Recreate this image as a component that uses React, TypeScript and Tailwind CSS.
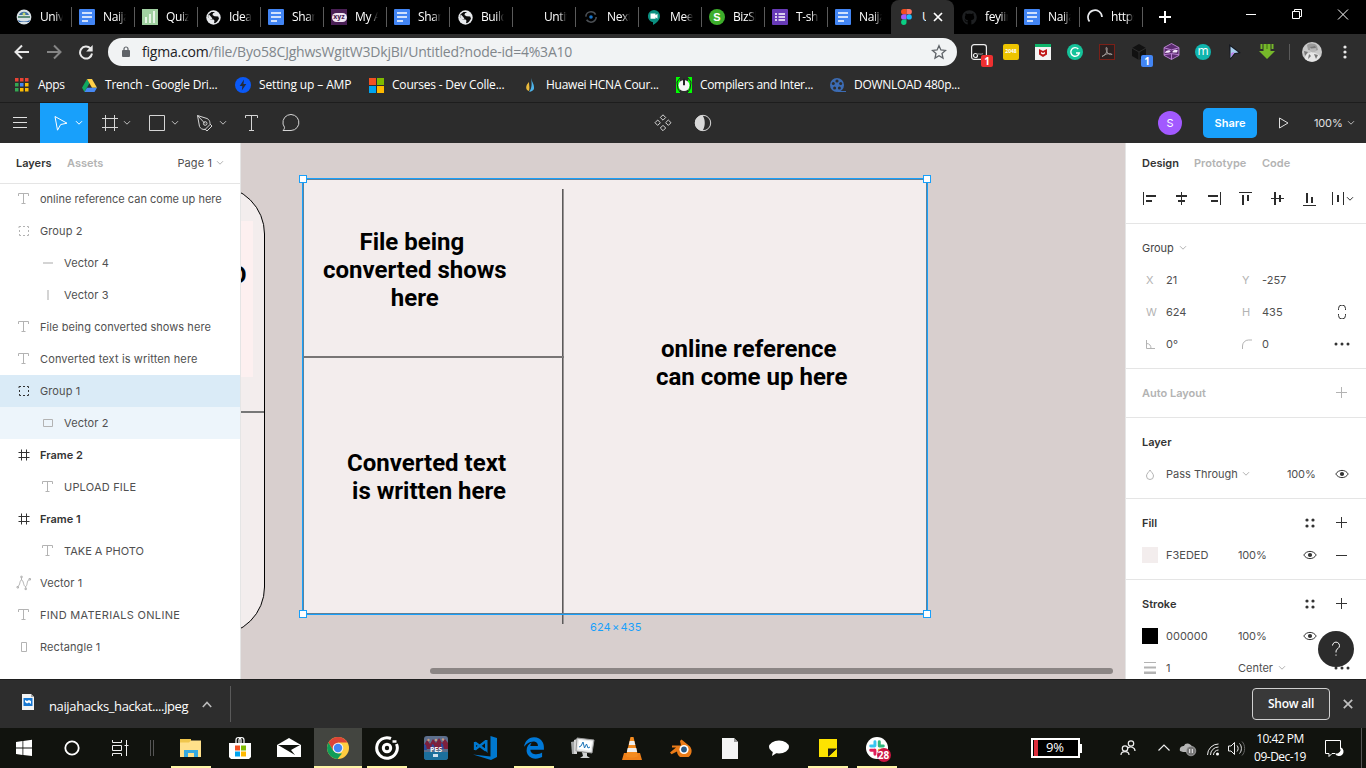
import React from "react";
import { FaGithub } from "react-icons/fa";
import { FaEdgeLegacy } from "react-icons/fa6";

type Kids = { children?: React.ReactNode };
type Rect = [number, number, number, number];

const Chevron = ({ color = "#b3b3b3", className = "" }: { color?: string; className?: string }) => (
  <svg width="8" height="6" viewBox="0 0 8 6" className={className} fill="none" stroke={color}>
    <path d="M1 1.2l3 3 3-3" />
  </svg>
);

const Rects = ({ items, size = 32, color = "#2c2c2c" }: { items: Rect[]; size?: number; color?: string }) => (
  <svg width={size} height={size} viewBox={`0 0 ${size} ${size}`} shapeRendering="crispEdges" fill={color}>
    {items.map(([x, y, w, h], i) => (
      <rect key={i} x={x} y={y} width={w} height={h} />
    ))}
  </svg>
);

/* ---------- browser tabs ---------- */

const DocIcon = () => (
  <svg width="16" height="16" viewBox="0 0 16 16">
    <rect width="16" height="16" rx="1" fill="#4285f4" />
    <path d="M3 4h10M3 8h10M3 12h6" stroke="#fff" strokeWidth="1.6" />
  </svg>
);
const GlobeIcon = () => (
  <svg width="15" height="15" viewBox="0 0 15 15">
    <circle cx="7.500" cy="7.500" r="7.200" fill="#e8eaed" />
    <path d="M9.500 2L7 3.200 6.500 5l2 1.200 3.700.3.800 2.300-2 3-2 1.500-1-.5.500-2-1-1.200-3.500-.3L1.800 6.500l.8-2.300L5.500 2z" fill="#0b0b0b" />
    <path d="M8 1.500l1.500 2-1.500 1.200 1 1 3 .3-1-3.500zM3 4.500l2.500 2.700L6.500 9l-3 .5L2 6z" fill="#e8eaed" />
  </svg>
);
const UniIcon = () => (
  <svg width="16" height="16" viewBox="0 0 16 16">
    <circle cx="8" cy="8" r="7.4" fill="#d9e2e6" />
    <path d="M3 6a5.5 5.5 0 0 1 10 0z" fill="#3a6ea5" />
    <path d="M2 7h12v2H2z" fill="#5d8f7a" />
    <path d="M2 11c4 2 8 2 12 0l-1 2H3z" fill="#3567a8" />
    <circle cx="8" cy="5" r="1.500" fill="#c2d66b" />
  </svg>
);
const QuizIcon = () => (
  <svg width="16" height="16" viewBox="0 0 16 16">
    <rect width="16" height="16" fill="#a0d0a0" />
    <path d="M4 14V8M8 14V5M12 14V2" stroke="#e6f5e6" strokeWidth="2" />
  </svg>
);
const XyzIcon = () => (
  <span className="flex h-4 w-4 items-center justify-center bg-[#4a1f55]">
    <span className="flex h-[9px] w-[15px] items-center justify-center rounded-full bg-[#f0e6f2] pb-px font-['Open_Sans',sans-serif] text-[7px] font-bold leading-none text-[#4a1f55]">xyz</span>
  </span>
);
const NextIcon = () => (
  <svg width="14" height="14" viewBox="0 0 14 14" fill="none">
    <circle cx="7" cy="7" r="5.200" stroke="#4b4f54" strokeWidth="1.600" strokeDasharray="13 3.300" />
    <circle cx="7" cy="7" r="1.800" fill="#1673c8" />
  </svg>
);
const MeetIcon = () => (
  <svg width="14" height="16" viewBox="0 0 14 16">
    <path d="M7 1a6.200 6.200 0 0 0-1 12.300V16c3-1.600 7-4.600 7-9A6 6 0 0 0 7 1z" fill="#0b8f80" />
    <path d="M3.500 4.500h5v1.700l2-1.500v5l-2-1.500v1.600h-5z" fill="#fff" />
  </svg>
);
const BizIcon = () => (
  <span className="flex h-4 w-4 items-center justify-center rounded-full bg-[#3dae2b] font-['Liberation_Sans',sans-serif] text-[11px] font-bold leading-none text-white">S</span>
);
const FormIcon = () => (
  <svg width="16" height="16" viewBox="0 0 16 16">
    <rect width="16" height="16" rx="1" fill="#673ab7" />
    <path d="M3 5h2M6.500 5H13M3 8h2M6.500 8H13M3 11h2M6.500 11H13" stroke="#fff" strokeWidth="1.700" />
  </svg>
);
const FigmaIcon = () => (
  <svg width="11" height="16" viewBox="0 0 11 16">
    <path d="M2.700 0H5.500v5.300H2.700a2.650 2.650 0 0 1 0-5.300z" fill="#f24e1e" />
    <path d="M5.500 0h2.700a2.650 2.650 0 0 1 0 5.300H5.500z" fill="#ff7262" />
    <path d="M2.700 5.300H5.500v5.300H2.700a2.650 2.650 0 0 1 0-5.300z" fill="#a259ff" />
    <circle cx="8.150" cy="7.950" r="2.650" fill="#1abcfe" />
    <path d="M2.700 10.600H5.500v2.700a2.700 2.700 0 1 1-2.800-2.700z" fill="#0acf83" />
  </svg>
);
const SpinIcon = () => (
  <svg width="16" height="16" viewBox="0 0 16 16" fill="none" stroke="#e8eaed" strokeWidth="1.700">
    <path d="M2.500 12.500A7 7 0 1 1 15 8" />
  </svg>
);

const tabs: { label: string; icon: React.ReactNode; active?: boolean; noSep?: boolean }[] = [
  { label: "University", icon: <UniIcon /> },
  { label: "Naija", icon: <DocIcon /> },
  { label: "Quizzes", icon: <QuizIcon /> },
  { label: "Ideas", icon: <GlobeIcon /> },
  { label: "Share", icon: <DocIcon /> },
  { label: "My Ac", icon: <XyzIcon /> },
  { label: "Share", icon: <DocIcon /> },
  { label: "Build", icon: <GlobeIcon /> },
  { label: "Untitl", icon: null },
  { label: "Next", icon: <NextIcon /> },
  { label: "Meet", icon: <MeetIcon /> },
  { label: "BizSk", icon: <BizIcon /> },
  { label: "T-shir", icon: <FormIcon /> },
  { label: "Naija", icon: <DocIcon />, noSep: true },
  { label: "U", icon: <FigmaIcon />, active: true },
  { label: "feyiin", icon: <FaGithub size={15} color="#1d1f21" /> },
  { label: "Naija", icon: <DocIcon /> },
  { label: "https", icon: <SpinIcon /> },
];

const TabStrip = () => (
  <div className="flex h-[34px] bg-black pl-[9px] text-xs text-white">
    {tabs.map((t, i) =>
      t.active ? (
        <div key={i} className="flex h-full w-[63px] shrink-0 items-center rounded-t-lg bg-[#2d2d2d] pl-[10px]">
          <FigmaIcon />
          <span className="ml-[10px] block w-[4px] overflow-hidden tracking-[-0.4px]">U</span>
          <svg width="10" height="10" viewBox="0 0 10 10" className="ml-[7px]" stroke="#fff" strokeWidth="1.700">
            <path d="M1 1l8 8M9 1l-8 8" />
          </svg>
        </div>
      ) : (
        <div key={i} className="flex h-full w-[63px] shrink-0 items-center pl-[7px]">
          <span className="flex w-4 justify-center">{t.icon}</span>
          <span className="ml-2 block w-[23px] overflow-hidden whitespace-nowrap tracking-[-0.4px] [mask-image:linear-gradient(to_right,#000_65%,transparent)]">{t.label}</span>
          {!t.noSep && <span className="ml-2 h-5 w-px bg-[#5a5a5a]" />}
        </div>
      ),
    )}
    <svg width="14" height="34" viewBox="0 0 14 34" className="ml-[15px] shrink-0" stroke="#fff" strokeWidth="2">
      <path d="M7 11v12M1 17h12" />
    </svg>
    <svg width="121" height="34" viewBox="0 0 121 34" className="ml-[73px] shrink-0" stroke="#fff" fill="none">
      <path d="M1 14.500h10M47.500 11.500h7v7h-7zM49.500 11.500v-2h7v7h-2M93 9.500l10 10M103 9.500l-10 10" />
    </svg>
  </div>
);

/* ---------- address bar ---------- */

const Ext = ({ children }: Kids) => (
  <span className="relative flex h-6 w-8 shrink-0 items-center justify-center">{children}</span>
);
const Count = ({ className }: { className: string }) => (
  <span className={`absolute right-[2px] top-[15px] flex h-3 w-3 items-center justify-center rounded-[2px] font-['Open_Sans',sans-serif] text-[10px] font-bold leading-none text-white ${className}`}>1</span>
);

const AddressBar = () => (
  <div className="flex h-[35px] items-center bg-[#2d2d2d] pl-[14px]">
    <svg width="84" height="16" viewBox="0 0 84 16" fill="none" strokeWidth="2">
      <path d="M15 8H2M8 1.500L1.500 8 8 14.500" stroke="#e8e8e8" />
      <path d="M33 8h13M40 1.500L46.500 8 40 14.500" stroke="#858585" />
      <path d="M76.500 4.500A6 6 0 1 0 78 9.500" stroke="#e8e8e8" />
      <path d="M78.700 1v6.500h-6.500z" fill="#e8e8e8" />
    </svg>
    <div className="ml-[10px] flex h-7 w-[849px] items-center rounded-full bg-[#f1f3f4] pl-[14px] pr-[10px]">
      <svg width="8" height="12" viewBox="0 0 8 12">
        <path d="M2 5V3a2 2 0 0 1 4 0v2" fill="none" stroke="#5f6368" strokeWidth="1.200" />
        <rect y="4" width="8" height="7" rx="1" fill="#5f6368" />
      </svg>
      <span className="ml-3 flex-1 whitespace-nowrap text-sm tracking-[-0.21px] text-[#80868b]">
        <span className="text-[#202124]">figma.com</span>/file/Byo58CJghwsWgitW3DkjBI/Untitled?node-id=4%3A10
      </span>
      <svg width="16" height="16" viewBox="0 0 16 16" fill="none" stroke="#5f6368" strokeWidth="1.300">
        <path d="M8 1.700l1.900 4.300 4.600.4-3.500 3.100 1 4.600L8 11.700l-4 2.400 1-4.600L1.500 6.400l4.600-.4z" />
      </svg>
    </div>
    <div className="ml-[6px] flex items-center">
      <Ext>
        <svg width="16" height="16" viewBox="0 0 16 16" fill="#1d1d1d" stroke="#eee" strokeWidth="1.200">
          <rect x=".6" y=".6" width="14.800" height="14.800" rx="2.500" />
          <circle cx="4.500" cy="11.500" r="2" />
          <path d="M6 10.500c2-2 3 1 6-1" fill="none" stroke="#888" />
        </svg>
        <Count className="bg-[#ee3030]" />
      </Ext>
      <Ext><span className="flex h-4 w-4 items-center justify-center rounded-[2px] bg-[#edc400] font-['Open_Sans',sans-serif] text-[5px] font-bold text-white">2048</span></Ext>
      <Ext>
        <svg width="16" height="16" viewBox="0 0 16 16">
          <path d="M0 0h16v16H0z" fill="#f3f3f3" />
          <path d="M0 0h16v3H0z" fill="#0fb56b" />
          <path d="M4 5l4 2 4-2v5.500L8 13l-4-2.500z" fill="#c01818" />
          <path d="M6 8l2 1 2-1v1.500l-2 1-2-1z" fill="#fff" />
        </svg>
      </Ext>
      <Ext>
        <svg width="16" height="16" viewBox="0 0 16 16" fill="none" stroke="#fff" strokeWidth="1.400">
          <circle cx="8" cy="8" r="8" fill="#15c39a" stroke="none" />
          <path d="M11.300 5A4.300 4.300 0 1 0 12.300 9H9" />
        </svg>
      </Ext>
      <Ext>
        <svg width="16" height="16" viewBox="0 0 16 16" fill="none">
          <rect x=".5" y=".5" width="15" height="15" fill="#2a2020" stroke="#7a2018" />
          <path d="M3 12.500c3-1 6-5 5-8.500-1-2-1.500 1 0 4 1 2 3 3 5 2.500-1-2-6-1-10 2z" stroke="#a09a98" />
        </svg>
      </Ext>
      <Ext>
        <svg width="16" height="16" viewBox="0 0 16 16">
          <path d="M8 0l7 4v8l-7 4-7-4V4z" fill="#111" />
          <path d="M1 4l7 4 7-4M8 8v8" stroke="#3a3a3a" fill="none" strokeWidth=".7" />
        </svg>
        <Count className="bg-[#4285f4]" />
      </Ext>
      <Ext>
        <svg width="17" height="17" viewBox="0 0 16 16" stroke="#c98fe0" strokeWidth=".8">
          <path d="M8 .5l7 3.800v7.400l-7 3.800-7-3.800V4.300z" fill="#5b2b70" />
          <path d="M1 4.500l7 2 7-2M1 11l7-1 7 1M8 10v5.500" fill="none" />
          <path d="M2 9.500c0-3 5-3.500 5-1.500 0 1.500-4 1-5 1.500zM9 8c1-2 4-2 5-1l-1 2H9z" fill="#f4e6fa" stroke="none" />
        </svg>
      </Ext>
      <Ext>
        <span className="flex h-4 w-4 items-center justify-center rounded-full bg-[#0fb5ae] pb-[2px] font-['Open_Sans',sans-serif] text-[12px] leading-none text-white">m</span>
      </Ext>
      <Ext>
        <svg width="14" height="16" viewBox="0 0 14 16">
          <path d="M1 0l12 9-6 1-5 6z" fill="#151820" />
          <path d="M2.500 2.500l8 6-4 .5-4 5z" fill="#a9cfee" />
          <path d="M3.500 9l3-1-3.500 5z" fill="#c06be8" />
        </svg>
      </Ext>
      <Ext>
        <svg width="16" height="16" viewBox="0 0 16 16" fill="#76b82a">
          <path d="M1.500 0h2v5h-2zM4.500 0h7v7H16l-8 8-8-8h4.500zM12.500 0h2v5h-2z" />
          <path d="M7.500 0h1v5h-1z" fill="#3d7011" />
        </svg>
      </Ext>
    </div>
    <span className="ml-[6px] h-4 w-px bg-[#5a5a5a]" />
    <svg width="20" height="20" viewBox="0 0 20 20" className="ml-3">
      <circle cx="10" cy="10" r="10" fill="#c9c9c9" />
      <path d="M5 3c3-2 8-2 10 1l1 4-3 1-7-1z" fill="#9a9a9a" />
      <path d="M3 17c0-4 2-6 5-6l2-2 3 2c3 1 5 2 5 4a10 10 0 0 1-15 2z" fill="#e6e6e6" />
      <circle cx="11" cy="7.500" r="3" fill="#b5b5b5" />
      <path d="M8 5l5-1 1 2-5 .5zM2 9l4 1-3 4zM12 12l4 1-2 4zM7 12l2 2-3 3z" fill="#777" />
    </svg>
    <svg width="4" height="14" viewBox="0 0 4 14" className="ml-[21px]" fill="#e8e8e8">
      <circle cx="2" cy="2" r="1.600" /><circle cx="2" cy="7" r="1.600" /><circle cx="2" cy="12" r="1.600" />
    </svg>
  </div>
);

const Bookmark = ({ icon, label, w, className }: { icon: React.ReactNode; label: string; w: string; className: string }) => (
  <div className={`flex shrink-0 items-center ${w}`}>
    <span className="flex w-4 justify-center">{icon}</span>
    <span className={`ml-2 whitespace-nowrap ${className}`}>{label}</span>
  </div>
);

const appColors = ["#ea4335", "#ea4335", "#ea4335", "#34a853", "#4285f4", "#fbbc05", "#34a853", "#fbbc05", "#fbbc05"];

const Bookmarks = () => (
  <div className="flex h-[34px] items-center border-b border-[#1d1d1d] bg-[#2d2d2d] pb-px pl-[14px] text-xs text-white">
    <Bookmark w="w-[67px]" label="Apps" className="tracking-[-0.3px]" icon={
      <svg width="14" height="14" viewBox="0 0 14 14">
        {appColors.map((c, i) => <rect key={i} x={(i % 3) * 5} y={Math.floor(i / 3) * 5} width="3.500" height="3.500" fill={c} />)}
      </svg>} />
    <Bookmark w="w-[154px]" label="Trench - Google Dri..." className="tracking-[-0.23px]" icon={
      <svg width="15" height="13" viewBox="0 0 15 13">
        <path d="M5 0L0 8.700 2.500 13l5-8.700z" fill="#11a861" />
        <path d="M5 0h5l5 8.700h-5z" fill="#ffcf48" />
        <path d="M5 8.700h10L12.500 13h-10z" fill="#4688f4" />
      </svg>} />
    <Bookmark w="w-[133px]" label="Setting up – AMP" className="tracking-[-0.13px]" icon={
      <svg width="16" height="16" viewBox="0 0 16 16">
        <circle cx="8" cy="8" r="8" fill="#0a59f7" /><path d="M9 2.500L4.700 9h2.700l-.6 4.500L11.300 7H8.500z" fill="#232b3b" />
      </svg>} />
    <Bookmark w="w-[154px]" label="Courses - Dev Colle..." className="tracking-[-0.2px]" icon={
      <svg width="15" height="15" viewBox="0 0 15 15">
        <path d="M0 0h7v7H0z" fill="#f25022" /><path d="M8 0h7v7H8z" fill="#7fba00" /><path d="M0 8h7v7H0z" fill="#00a4ef" /><path d="M8 8h7v7H8z" fill="#ffb900" />
      </svg>} />
    <Bookmark w="w-[154px]" label="Huawei HCNA Cour..." className="tracking-[-0.26px]" icon={
      <svg width="8" height="14" viewBox="0 0 8 14">
        <path d="M5 0c1 4 3 6 3 9a4 4 0 0 1-5 4.500C6 11 6 5 5 0z" fill="#4db2e8" /><path d="M3 4c0 4 1 5 0 9C-.5 12-1 8 3 4z" fill="#e9b93b" />
      </svg>} />
    <Bookmark w="w-[154px]" label="Compilers and Inter..." className="tracking-[-0.33px]" icon={
      <svg width="16" height="16" viewBox="0 0 16 16">
        <path d="M0 0h4v16H0zM12 0h4v16h-4z" fill="#0f0" /><circle cx="8" cy="8.500" r="5.500" fill="#f4f4f4" /><path d="M7.500 2v6h1V2zM4 1l-3 4 1 7 2 3M12 1l3 4-1 7-2 3" fill="none" stroke="#222" />
      </svg>} />
    <Bookmark w="w-[154px]" label="DOWNLOAD 480p..." className="tracking-[-0.3px]" icon={
      <svg width="16" height="15" viewBox="0 0 16 15">
        <circle cx="7" cy="7" r="7" fill="#3c6cb4" /><path d="M8 13h8v1H8z" fill="#3c6cb4" />
        <g fill="#2d2d2d"><circle cx="7" cy="3" r="1.600" /><circle cx="3.300" cy="5.500" r="1.500" /><circle cx="10.700" cy="5.500" r="1.500" /><circle cx="4.600" cy="10" r="1.500" /><circle cx="9.400" cy="10" r="1.500" /></g>
      </svg>} />
  </div>
);

/* ---------- editor toolbar ---------- */

const Toolbar = () => (
  <div className="flex h-10 items-center bg-[#2c2c2c] text-[11px] text-white">
    <svg width="40" height="40" viewBox="0 0 40 40" stroke="#e0e0e0"><path d="M13 14.500h14M13 19.500h14M13 24.500h14" /></svg>
    <span className="flex h-10 w-12 items-center bg-[#18a0fb]">
      <svg width="35" height="40" viewBox="0 0 35 40" fill="none" stroke="#fff"><path d="M15 13.500l12 6.700-6.300 1.300-3.200 5.700z" /></svg>
      <Chevron color="#fff" />
    </span>
    <svg width="35" height="40" viewBox="0 0 35 40" stroke="#d5d5d5"><path d="M17.500 12v16M26.500 12v16M14 15.500h16M14 24.500h16" /></svg>
    <Chevron color="#c0c0c0" />
    <svg width="40" height="40" viewBox="0 0 40 40" fill="none" stroke="#d5d5d5"><path d="M18.500 12.500h15v15h-15z" /></svg>
    <Chevron color="#c0c0c0" />
    <svg width="40" height="40" viewBox="0 0 40 40" fill="none" stroke="#d5d5d5"><path d="M18.500 12.500l9.500 3c3 1.500 3 4 3 6l-5 5c-3 0-4.500-1-5.500-3zM18.500 12.500l7.500 8M31 21l2 2-5 5-2.200-2" /><circle cx="26.200" cy="20.500" r="1.800" /></svg>
    <Chevron color="#c0c0c0" />
    <svg width="40" height="40" viewBox="0 0 40 40" fill="none" stroke="#d5d5d5"><path d="M18.500 15v-2.500h12V15M24.500 12.500v15M22 27.500h5" /></svg>
    <svg width="40" height="40" viewBox="0 0 40 40" fill="none" stroke="#d5d5d5"><path d="M16 27.500c1-1 1.500-2 1.500-3.200a8 8 0 1 1 6.500 3.200z" /></svg>
    <span className="w-[336px]" />
    <svg width="40" height="40" viewBox="0 0 40 40" fill="none" stroke="#d5d5d5">
      <path d="M20 11.800l2.700 2.700L20 17.200l-2.700-2.700zM20 22.300l2.700 2.700-2.700 2.700-2.700-2.700zM14.700 17l2.700 2.700-2.700 2.700-2.700-2.700zM25.300 17l2.700 2.700-2.700 2.700-2.700-2.700z" />
    </svg>
    <svg width="40" height="40" viewBox="0 0 40 40" fill="none" stroke="#d8d8d8">
      <circle cx="20" cy="20" r="7.700" /><path d="M19.500 12.300a7.700 7.700 0 0 0 0 15.400c3-4 3-11.400 0-15.400z" fill="#d8d8d8" stroke="none" />
    </svg>
    <span className="flex-1" />
    <span className="flex h-6 w-6 items-center justify-center rounded-full bg-[#a259ff]">S</span>
    <span className="ml-[21px] flex h-[30px] w-[54px] items-center justify-center rounded-[5px] bg-[#18a0fb] font-semibold">Share</span>
    <svg width="12" height="12" viewBox="0 0 12 12" className="ml-[21px]" fill="none" stroke="#e0e0e0"><path d="M1.500 1l8.500 5-8.500 5z" /></svg>
    <span className="ml-6 w-[33px] whitespace-nowrap tracking-[-0.15px] text-[#e0e0e0]">100%</span>
    <Chevron color="#b8b8b8" className="mr-[11px]" />
  </div>
);

/* ---------- layers panel ---------- */

type Kind = "text" | "group" | "groupOn" | "h" | "v" | "rect" | "frame" | "vector" | "rectV";
const LayerIcon = ({ kind }: { kind: Kind }) => (
  <svg width="16" height="16" viewBox="0 0 16 16" fill="none" stroke={kind === "frame" || kind === "groupOn" ? "#333" : "#b3b3b3"}>
    {kind === "text" && <path d="M2.500 5V2.500h10V5M7.500 2.500v10M5.500 12.500h4" />}
    {(kind === "group" || kind === "groupOn") && <path d="M3 5V3.500h2M7 3.500h2M11 3.500h1.500V5M12.500 7v2M12.500 11v1.500H11M9 12.500H7M5 12.500H3.500V11M3.500 9V7" />}
    {kind === "h" && <path d="M3 8h10" stroke="#d4d4d4" strokeWidth="2" />}
    {kind === "v" && <path d="M8 3v10" stroke="#d4d4d4" strokeWidth="2" />}
    {kind === "rect" && <path d="M3.500 4.500h9v7h-9z" />}
    {kind === "rectV" && <path d="M5.500 3.500h5v9h-5z" />}
    {kind === "frame" && <path d="M5.500 2.500v11M10.500 2.500v11M2.500 5.500h11M2.500 10.500h11" />}
    {kind === "vector" && <path d="M2.200 11c2-.5 1.300-6 3.300-6 2.200 0 1.800 6.500 4 6.500 2 0 1.200-6 3.500-6.800M1 11.500h1.500V13H1zM13 3.500h1.500V5H13zM4.800 1.200h1.400v1.400H4.800zM9 13.200h1.400v1.400H9zM5.500 2.500v2.500M9.700 11.500v1.700" />}
  </svg>
);

const layers: { label: string; kind: Kind; indent?: boolean; bg?: string; cls?: string }[] = [
  { label: "online reference can come up here", kind: "text", cls: "tracking-[0.01px]" },
  { label: "Group 2", kind: "group" },
  { label: "Vector 4", kind: "h", indent: true },
  { label: "Vector 3", kind: "v", indent: true },
  { label: "File being converted shows here", kind: "text", cls: "tracking-[0.06px]" },
  { label: "Converted text is written here", kind: "text", cls: "tracking-[0.13px]" },
  { label: "Group 1", kind: "groupOn", bg: "bg-[#daebf7]" },
  { label: "Vector 2", kind: "rect", indent: true, bg: "bg-[#edf5fb]" },
  { label: "Frame 2", kind: "frame", cls: "font-semibold text-[#333]" },
  { label: "UPLOAD FILE", kind: "text", indent: true, cls: "tracking-[0.2px]" },
  { label: "Frame 1", kind: "frame", cls: "font-semibold text-[#333]" },
  { label: "TAKE A PHOTO", kind: "text", indent: true, cls: "tracking-[0px]" },
  { label: "Vector 1", kind: "vector" },
  { label: "FIND MATERIALS ONLINE", kind: "text", cls: "tracking-[0.3px]" },
  { label: "Rectangle 1", kind: "rectV" },
];

const LayersPanel = () => (
  <aside className="flex w-[241px] shrink-0 flex-col border-r border-[#e5e5e5] bg-white text-[11px] text-[#333]">
    <div className="flex h-[41px] shrink-0 items-center border-b border-[#e5e5e5] pl-4 pr-4">
      <span className="w-[51px] font-semibold">Layers</span>
      <span className="font-semibold text-[#b3b3b3]">Assets</span>
      <span className="ml-auto mr-1 tracking-[0.1px] text-[#4f4f4f]">Page 1</span>
      <Chevron />
    </div>
    <div className="-mt-px">
      {layers.map((l) => (
        <div key={l.label} className={`flex h-8 items-center ${l.indent ? "pl-10" : "pl-4"} ${l.bg ?? ""}`}>
          <LayerIcon kind={l.kind} />
          <span className={`ml-2 whitespace-nowrap ${l.cls?.startsWith("font") ? "" : "text-[#505050]"} ${l.cls ?? "tracking-[0.1px]"}`}>{l.label}</span>
        </div>
      ))}
    </div>
  </aside>
);

/* ---------- canvas ---------- */

const Handle = ({ x, y }: { x: number; y: number }) => <rect x={x} y={y} width="7" height="7" fill="#fff" stroke="#18a0fb" />;

const canvasText = "absolute whitespace-pre font-['Roboto',sans-serif] text-2xl font-bold leading-7 text-black";

const Canvas = () => (
  <main className="relative flex-1 overflow-hidden bg-[#d8cfce]">
    <svg width="884" height="536" viewBox="241 143 884 536" className="absolute left-0 top-0" fill="none">
      <rect x="100" y="186" width="164.500" height="449" rx="48" fill="#f3eded" stroke="#000" />
      <path d="M200 221h53v156h-53z" fill="#fdf0f0" />
      <path d="M241 412h23" stroke="#777" strokeWidth="2" />
      <rect x="303" y="179" width="624" height="435" fill="#f3eded" />
      <path d="M562.500 189v435" stroke="#5c5a5a" />
      <path d="M563.500 189v435" stroke="#989494" />
      <path d="M303 357h261" stroke="#787575" strokeWidth="2" />
      <path d="M303.500 179.500h623v434h-623z" stroke="#777" />
      <path d="M302.650 178.650h624.700v435.700h-624.700z" stroke="#18a0fb" strokeWidth="1.300" />
      <Handle x={299.5} y={175.5} /><Handle x={923.5} y={175.5} /><Handle x={299.5} y={610.5} /><Handle x={923.5} y={610.5} />
    </svg>
    <span className={`${canvasText} -left-[11px] top-[118px]`}>O</span>
    <span className={`${canvasText} left-[82px] top-[85px] text-center`}>{"File being \nconverted shows\nhere"}</span>
    <span className={`${canvasText} left-[106px] top-[306px] text-right`}>{"Converted text\nis written here"}</span>
    <span className={`${canvasText} left-[415px] top-[192px] text-center`}>{"online reference \ncan come up here"}</span>
    <span className="absolute left-[349px] top-[477px] whitespace-nowrap text-[11px] leading-[14px] tracking-[0.1px] text-[#18a0fb] [word-spacing:-2px]">624 × 435</span>
    <span className="absolute left-[189px] top-[525px] h-[6px] w-[683px] rounded-full bg-[#8b8584]" />
  </main>
);

/* ---------- design panel ---------- */

const alignIcons: Rect[][] = [
  [[10, 9, 1, 13], [13, 12, 10, 2], [13, 17, 6, 2]],
  [[16, 9, 1, 13], [11, 12, 11, 2], [13, 17, 7, 2]],
  [[23, 9, 1, 13], [11, 12, 10, 2], [14, 17, 7, 2]],
  [[10, 9, 13, 1], [13, 12, 2, 10], [18, 12, 2, 6]],
  [[10, 15, 13, 1], [13, 9, 2, 13], [18, 12, 2, 7]],
  [[10, 22, 13, 1], [13, 10, 2, 10], [18, 14, 2, 6]],
  [[7, 9, 1, 13], [18, 9, 1, 13], [12, 12, 2, 7]],
];

const Eye = () => (
  <svg width="14" height="10" viewBox="0 0 14 10" fill="none" stroke="#333">
    <path d="M.8 5C3.500.2 10.500.2 13.200 5 10.500 9.800 3.500 9.800.8 5z" /><circle cx="7" cy="5" r="2.100" fill="#333" stroke="none" />
  </svg>
);
const Plus = ({ color = "#333" }: { color?: string }) => <svg width="12" height="12" viewBox="0 0 12 12" stroke={color}><path d="M5.500 0v11M0 5.500h11" /></svg>;
const Dots3 = () => <svg width="16" height="4" viewBox="0 0 16 4" fill="#333"><circle cx="2" cy="2" r="1.500" /><circle cx="8" cy="2" r="1.500" /><circle cx="14" cy="2" r="1.500" /></svg>;
const Dots4 = () => <svg width="10" height="10" viewBox="0 0 10 10" fill="#333"><circle cx="2" cy="2" r="1.600" /><circle cx="8" cy="2" r="1.600" /><circle cx="2" cy="8" r="1.600" /><circle cx="8" cy="8" r="1.600" /></svg>;

const Section = ({ children }: Kids) => <section className="border-b border-[#e5e5e5] py-2">{children}</section>;
const Row = ({ children }: Kids) => <div className="flex h-8 items-center pl-4">{children}</div>;
const Cell = ({ children, className = "" }: Kids & { className?: string }) => (
  <span className={`flex shrink-0 items-center whitespace-nowrap ${className}`}>{children}</span>
);
const Tail = ({ left, right }: { left?: React.ReactNode; right?: React.ReactNode }) => (
  <span className="ml-auto flex shrink-0 items-center pr-2">
    {left && <span className="flex w-8 justify-center">{left}</span>}
    <span className="flex w-8 justify-center">{right}</span>
  </span>
);
const Key = ({ children }: Kids) => <Cell className="w-6 pl-1 text-[#b3b3b3]">{children}</Cell>;

const DesignPanel = () => (
  <aside className="relative w-[241px] shrink-0 overflow-hidden border-l border-[#e5e5e5] bg-white text-[11px] text-[#333]">
    <div className="flex h-10 items-center pl-4 font-semibold text-[#b3b3b3]">
      <span className="w-[52px] text-[#333]">Design</span>
      <span className="w-[68px]">Prototype</span>
      <span>Code</span>
    </div>
    <div className="flex h-[41px] border-b border-[#e5e5e5] pl-[7px]">
      {alignIcons.map((r, i) => <Rects key={i} items={r} />)}
      <Chevron color="#333" className="-ml-[11px] mt-[13px] shrink-0" />
    </div>
    <Section>
      <Row><span className="tracking-[-0.05px] text-[#444]">Group</span><Chevron className="ml-[5px]" /></Row>
      <Row><Key>X</Key><Cell className="w-[72px] text-[#4f4f4f]">21</Cell><Key>Y</Key><Cell className="w-10 text-[#4f4f4f]">-257</Cell></Row>
      <Row><Key>W</Key><Cell className="w-[72px] text-[#4f4f4f]">624</Cell><Key>H</Key><Cell className="w-10 text-[#4f4f4f]">435</Cell>
        <Tail right={<svg width="8" height="14" viewBox="0 0 8 14" fill="none" stroke="#333"><path d="M.5 5V3.500a3 3 0 0 1 7 0V5M.5 9v1.500a3 3 0 0 0 7 0V9" /></svg>} /></Row>
      <Row>
        <Key><svg width="9" height="9" viewBox="0 0 9 9" fill="none" stroke="#b3b3b3"><path d="M.5 0v8.500H9M.5 3.500c3 0 4.500 2 4.500 5" /></svg></Key>
        <Cell className="w-[72px] text-[#4f4f4f]">0°</Cell>
        <Key><svg width="10" height="10" viewBox="0 0 10 10" fill="none" stroke="#b3b3b3"><path d="M.5 10V7a6 6 0 0 1 6-6H10" /></svg></Key>
        <Cell className="w-10 text-[#4f4f4f]">0</Cell><Tail right={<Dots3 />} />
      </Row>
    </Section>
    <Section><Row><span className="font-semibold text-[#b3b3b3]">Auto Layout</span><Tail right={<Plus color="#b3b3b3" />} /></Row></Section>
    <Section>
      <Row><span className="font-semibold">Layer</span></Row>
      <Row>
        <Key><svg width="8" height="11" viewBox="0 0 8 11" fill="none" stroke="#b3b3b3"><path d="M4 1C3 3 .5 4.500.5 7a3.500 3.500 0 0 0 7 0C7.500 4.500 5 3 4 1z" /></svg></Key>
        <Cell className="w-[121px] text-[#4f4f4f]">Pass Through<Chevron className="ml-1" /></Cell>
        <span className="tracking-[-0.15px] text-[#4f4f4f]">100%</span><Tail right={<Eye />} />
      </Row>
    </Section>
    <Section>
      <Row><span className="font-semibold">Fill</span><Tail left={<Dots4 />} right={<Plus />} /></Row>
      <Row><Cell className="w-6"><span className="h-4 w-4 bg-[#f3eded]" /></Cell><Cell className="w-[72px] text-[#4f4f4f]">F3EDED</Cell><Cell className="w-[50px] tracking-[-0.15px] text-[#4f4f4f]">100%</Cell>
        <Tail left={<Eye />} right={<span className="mr-px h-px w-[11px] bg-[#333]" />} /></Row>
    </Section>
    <Section>
      <Row><span className="font-semibold">Stroke</span><Tail left={<Dots4 />} right={<Plus />} /></Row>
      <Row><Cell className="w-6"><span className="h-4 w-4 bg-black" /></Cell><Cell className="w-[72px] text-[#4f4f4f]">000000</Cell><Cell className="w-[50px] tracking-[-0.15px] text-[#4f4f4f]">100%</Cell><Tail left={<Eye />} /></Row>
      <Row>
        <Cell className="w-6 pl-[2px]"><svg width="12" height="12" viewBox="0 0 12 12" fill="#b3b3b3"><path d="M0 0h12v1H0zM0 4.500h12v2H0zM0 9.500h12v2.500H0z" /></svg></Cell>
        <Cell className="w-[72px] text-[#4f4f4f]">1</Cell><Cell className="w-[60px] text-[#4f4f4f]">Center<Chevron className="ml-[5px]" /></Cell><Tail right={<Dots3 />} />
      </Row>
    </Section>
    <span className="absolute bottom-3 right-3 flex h-9 w-9 items-center justify-center rounded-full bg-[#2c2c2c]">
      <svg width="10" height="16" viewBox="0 0 10 16" fill="none" stroke="#fff"><path d="M1.500 4.500a3.500 3.500 0 1 1 5.500 3c-1.500 1-2 1.500-2 4M5 13.500v1.200" /></svg>
    </span>
  </aside>
);

/* ---------- download shelf ---------- */

const Shelf = () => (
  <div className="flex h-[49px] shrink-0 items-center border-t border-[#1e1e1e] bg-[#2d2d2d] text-white">
    <svg width="12" height="16" viewBox="0 0 12 16" className="mb-1 ml-[22px]">
      <path d="M0 0h9l3 3v13H0z" fill="#f3f3f3" /><path d="M9 0l3 3H9z" fill="#aaa" /><path d="M1.500 4h9v8h-9z" fill="#1677d2" /><path d="M3 6l2 1 2-1 2 1v3L7 8.500 5 9.500 3 8z" fill="#fff" />
    </svg>
    <span className="ml-[15px] mt-[3px] w-[139px] whitespace-nowrap text-[13px] leading-4 tracking-[-0.37px]">naijahacks_hackat....jpeg</span>
    <svg width="10" height="7" viewBox="0 0 10 7" className="ml-[14px]" fill="none" stroke="#bbb" strokeWidth="1.600"><path d="M.8 6L5 1.500 9.200 6" /></svg>
    <span className="ml-[18px] h-9 w-px bg-[#5a5a5a]" />
    <span className="ml-auto flex h-8 w-[78px] items-center justify-center rounded border border-[#d0d0d0] bg-[#393939] pb-px text-xs font-semibold tracking-[-0.25px]">Show all</span>
    <svg width="10" height="10" viewBox="0 0 10 10" className="mb-px ml-[13px] mr-[13px]" stroke="#c0c0c0" strokeWidth="1.700"><path d="M.8.8l8.400 8.400M9.200.8L.8 9.200" /></svg>
  </div>
);

/* ---------- taskbar ---------- */

const ChromeLogo = () => (
  <svg width="22" height="22" viewBox="0 0 22 22">
    <circle cx="11" cy="11" r="11" fill="#ffcd40" />
    <path d="M1.500 5.500A11 11 0 0 1 20.500 5.500H11L6.200 13.700z" fill="#db4437" />
    <path d="M1.500 5.500l4.700 8.200L11 16.500h4L10.500 22A11 11 0 0 1 1.500 5.500z" fill="#0f9d58" />
    <circle cx="11" cy="11" r="5.300" fill="#f1f1f1" /><circle cx="11" cy="11" r="4.200" fill="#4285f4" />
  </svg>
);

const apps: { icon: React.ReactNode; open?: boolean; active?: boolean }[] = [
  { open: true, icon: (
    <svg width="22" height="18" viewBox="0 0 22 18"><path d="M0 0h11v2h10v16H0z" fill="#f0c64c" /><path d="M0 3.500h9l2-2h10V18H0z" fill="#ffe08a" /><path d="M4 18v-7h14v7h-4v-4H8v4z" fill="#35a9e0" /></svg>) },
  { icon: (
    <svg width="24" height="24" viewBox="0 0 24 24"><path d="M8 8V4a2.500 2.500 0 0 1 5 0v4M11 8V4a2.500 2.500 0 0 1 5 0v4" fill="none" stroke="#fff" strokeWidth="1.200" /><path d="M1 7h22v14l-2 2H3l-2-2z" fill="#fff" /><path d="M7 9.500h5v5H7z" fill="#f25022" /><path d="M13 9.500h5v5h-5z" fill="#7fba00" /><path d="M7 15.500h5v5H7z" fill="#00a4ef" /><path d="M13 15.500h5v5h-5z" fill="#ffb900" /></svg>) },
  { icon: <svg width="24" height="20" viewBox="0 0 24 20"><path d="M0 7l12-7 12 7v12H0z" fill="#fff" /><path d="M1 7h22l-9 5 4 5z" fill="#11130e" /></svg> },
  { open: true, active: true, icon: <ChromeLogo /> },
  { open: true, icon: (
    <svg width="24" height="24" viewBox="0 0 24 24" fill="none" stroke="#fff" strokeWidth="3"><path d="M16 2.500A10.300 10.300 0 1 0 21.500 8" /><circle cx="12" cy="12" r="3.700" /><path d="M17.500 5.500h4" strokeWidth="2.500" /></svg>) },
  { icon: (
    <svg width="24" height="24" viewBox="0 0 24 24">
      <rect width="24" height="24" rx="3" fill="#5d6f8d" />
      <path d="M0 9l3-5 3 4 3-5 3 4 3-5 3 5 3-4 3 4v6H0z" fill="#7d1f3c" />
      <path d="M0 8l2 1 1 5H0zM8 8l2 1 1 5H7zM17 7l2 1 1 5h-3z" fill="#2b4a9c" />
      <path d="M0 16h24v5a3 3 0 0 1-3 3H3a3 3 0 0 1-3-3z" fill="#1c6f9c" />
      <circle cx="4.500" cy="4" r="1.200" fill="#c99a80" /><circle cx="12" cy="4" r="1.200" fill="#c99a80" /><circle cx="19" cy="3.500" r="1.200" fill="#c99a80" />
      <path d="M9 18h5v3H9z" fill="#cfe0ee" />
      <text x="12" y="15.500" textAnchor="middle" fontSize="7" fontWeight="700" fontFamily="Open Sans, sans-serif" fill="#f2f2f2">PES</text>
    </svg>) },
  { icon: <svg width="24" height="24" viewBox="0 0 24 24" fill="#0078cf"><path d="M17.500 0L24 2v19l-6 3L0 18.500l17.500 2z" /><path d="M2 6.500l11 8M2 13.500l11-8.500M2 6v8" fill="none" stroke="#0078cf" strokeWidth="2.300" /><path d="M12 4h2.500v13L12 14z" /></svg> },
  { open: true, icon: <FaEdgeLegacy size={22} color="#0078d7" /> },
  { icon: (
    <svg width="24" height="22" viewBox="0 0 24 22"><path d="M0 5l5-1v13H1z" fill="#a5a8a8" /><path d="M3 3l3-1v15H3z" fill="#d5d5d5" /><path d="M6 1l17 2-2 13-16-2z" fill="#e8eaea" stroke="#9a9a9a" /><path d="M8 3l13 1.500-1.500 9L7 12z" fill="#fff" /><path d="M8 10l2-1 2-4 1.500 6 2-4 1.500 4 2-1" fill="none" stroke="#1a73b8" /><path d="M11 15l5 1 0 3 3 2H9l3-2z" fill="#cfd2d2" /></svg>) },
  { icon: (
    <svg width="20" height="23" viewBox="0 0 20 23"><path d="M2 16h16l2 7H0z" fill="#f08019" /><path d="M8.500 0h3L16 19c-3 2-9 2-12 0z" fill="#f38b20" /><path d="M7.700 4h4.600l1 4H6.800zM5.700 11h8.600l.9 4H4.800z" fill="#efefef" /></svg>) },
  { icon: (
    <svg width="22" height="18" viewBox="0 0 22 18">
      <path d="M11.500.5L20 7.500a7.300 7.300 0 1 1-13 5l-5.500 2.700L0 13.500l6-5H2V6.500h9L10 2z" fill="#ea7b18" />
      <circle cx="14" cy="10.500" r="4.600" fill="#fff" /><circle cx="14" cy="10.500" r="2.900" fill="#265787" />
    </svg>) },
  { icon: <svg width="16" height="21" viewBox="0 0 16 21"><path d="M0 0h12l4 4v17H0z" fill="#f4f4f4" /><path d="M12 0l4 4h-4z" fill="#999" /></svg> },
  { icon: <svg width="20" height="16" viewBox="0 0 20 16" fill="#fff"><ellipse cx="10" cy="7" rx="10" ry="6.500" /><path d="M4 11l-1 5 6-4z" /></svg> },
  { open: true, icon: <svg width="18" height="18" viewBox="0 0 18 18"><path d="M0 0h18v18H0z" fill="#fde300" /><path d="M9 18V9.500h9z" fill="#1b1b13" /><path d="M18 10v8h-9z" fill="#fde300" /><path d="M9.500 17.500v-7.500h8z" fill="#1b1b13" /></svg> },
  { open: true, icon: (
    <span className="relative flex h-[22px] w-[22px] items-center justify-center rounded-full bg-white">
      <svg width="16" height="16" viewBox="0 0 14 14" fill="none" strokeWidth="2.600" strokeLinecap="round"><path d="M5.200 1.500V5M1.500 5.200H5" stroke="#36c5f0" /><path d="M9 1.500V5M9 5.200h3.500" stroke="#2eb67d" /><path d="M1.500 9H5M5.200 9v3.500" stroke="#e01e5a" /><path d="M9 9h3.500" stroke="#ecb22e" /></svg>
      <span className="absolute -bottom-[3px] -right-[3px] flex h-[14px] w-[14px] items-center justify-center rounded-full bg-[#cc1543] font-['Open_Sans',sans-serif] text-[10px] font-bold leading-none text-white">28</span>
    </span>) },
];

const Taskbar = () => (
  <div className="flex h-10 shrink-0 items-center bg-[#11130e] text-white">
    <svg width="156" height="40" viewBox="0 0 156 40" fill="none" className="shrink-0">
      <path d="M16 14l6.500-.9v6.400H16zM23.300 13l8.700-1.200v7.700h-8.700zM16 20.400h6.500v6.500L16 26zM23.300 20.400H32v7.700L23.300 27z" fill="#fff" />
      <circle cx="72" cy="20" r="6.700" stroke="#fff" strokeWidth="1.800" />
      <path d="M112.500 12v2.500h9V12M112.500 28v-2.500h9V28M112.500 17.500h9v5h-9zM126.500 12v16M124.500 17.500h4" stroke="#eee" />
      <path d="M150.500 12v16M153.500 12v16" stroke="#555" />
    </svg>
    <div className="ml-[10px] flex h-10 shrink-0">
      {apps.map((a, i) => (
        <div key={i} className="flex w-[49px] flex-col items-center">
          <div className={`flex h-[38px] w-12 items-center justify-center pt-[2px] ${a.active ? "bg-[#434540]" : ""}`}>{a.icon}</div>
          {a.open && <div className={`h-[2px] bg-[#fdf5a6] ${a.active ? "w-12" : "w-10"}`} />}
        </div>
      ))}
    </div>
    <div className="ml-[130px] flex h-5 w-[49px] shrink-0 items-center border-2 border-white bg-black pl-px text-[13px]">
      <span className="h-4 w-[4px] bg-[#dc2e3c]" />
      <span className="ml-2 tracking-[-0.2px]">9%</span>
    </div>
    <span className="h-[9px] w-[2px] shrink-0 bg-white" />
    <svg width="164" height="40" viewBox="1082 0 164 40" fill="none" stroke="#eee" className="shrink-0">
      <circle cx="1131" cy="15.500" r="2.700" strokeWidth="1.200" /><path d="M1128 20c2-2 7-1 7 3" strokeWidth="1.200" />
      <circle cx="1125" cy="20.500" r="2.700" strokeWidth="1.200" /><path d="M1121 27c0-4.500 8-4.500 8 0" strokeWidth="1.200" />
      <path d="M1158.500 22.500l5.500-5.500 5.500 5.500" strokeWidth="1.200" />
      <path d="M1180 23c-1-4 2-5 4-5 1-4 7-3 8 1l-2 5h-7z" fill="#b5b5b5" stroke="none" />
      <circle cx="1191" cy="23" r="4.800" fill="#777" stroke="#bbb" strokeWidth=".6" /><path d="M1189.700 21v4M1192.300 21v4" />
      <path d="M1207.500 27a11 11 0 0 1 11-11M1210.500 27a8 8 0 0 1 8-8M1213.500 27a5 5 0 0 1 5-5" /><circle cx="1217.500" cy="26" r="1.500" fill="#fff" stroke="none" />
      <path d="M1228.500 18h2.500l3.500-3.500v12l-3.500-3.500h-2.500zM1237 17.500c1.500 1.500 1.500 4.500 0 6M1239.500 15.500c2.500 2.500 2.500 7.500 0 10" /><path d="M1242 13.500c3.500 3.500 3.500 10.500 0 14" stroke="#666" />
    </svg>
    <div className="flex w-[68px] shrink-0 flex-col items-center text-xs leading-[18px] tracking-[-0.5px]">
      <span className="whitespace-nowrap">10:42 PM</span>
      <span className="whitespace-nowrap">09-Dec-19</span>
    </div>
    <svg width="48" height="40" viewBox="1314 0 48 40" fill="none" stroke="#fff" className="shrink-0">
      <path d="M1335 25.500h-3l-3 3v-3h-3.500v-13h15v9" /><path d="M1341 19.500a4.500 4.500 0 1 1-6 6c4 .5 6-2 6-6z" fill="#fff" stroke="none" /><path d="M1361.500 0v40" stroke="#555" />
    </svg>
  </div>
);

export default function App() {
  return (
    <div className="flex h-[768px] w-[1366px] flex-col overflow-hidden font-['Open_Sans','Noto_Sans',sans-serif]">
      <TabStrip />
      <AddressBar />
      <Bookmarks />
      <div className="flex h-[576px] shrink-0 flex-col font-['Inter',sans-serif]">
        <Toolbar />
        <div className="flex min-h-0 flex-1">
          <LayersPanel />
          <Canvas />
          <DesignPanel />
        </div>
      </div>
      <Shelf />
      <Taskbar />
    </div>
  );
}
